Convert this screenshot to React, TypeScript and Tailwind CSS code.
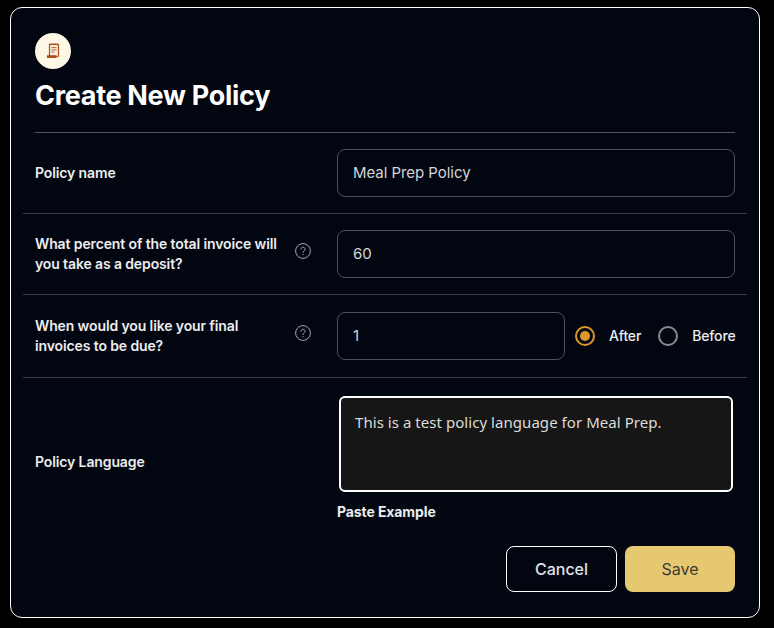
const FONT = { fontFamily: "Inter, 'Liberation Sans', sans-serif" };

function NotepadIcon() {
  return (
    <svg width="14" height="16" viewBox="0 0 14 16" fill="none">
      <path d="M3.5 1.5h9v12h-9z" fill="#fdeedb" stroke="#a8521f" strokeWidth="1.2" />
      <path d="M3.5 1h9" stroke="#a8521f" strokeWidth="1.6" strokeDasharray="1.2 0.6" />
      <path d="M5.4 4.6h5.2M5.4 6.8h5.2M5.4 9h3" stroke="#b9703f" strokeWidth="1" />
      <path d="M1 12.2h9.6v2.8H1z" fill="#a8521f" />
      <path d="M10.6 13.2h2v1h-2z" fill="#c98a5e" />
    </svg>
  );
}

function HelpIcon() {
  return (
    <svg width="16" height="16" viewBox="0 0 16 16" fill="none" className="shrink-0 text-[#a3a5aa]">
      <circle cx="8" cy="8" r="7.4" stroke="currentColor" strokeWidth="1" />
      <path
        d="M5.9 6.2C6 5 6.9 4.3 8 4.3c1.2 0 2.1.8 2.1 1.9 0 1.7-2.1 1.7-2.1 3.3"
        stroke="currentColor"
        strokeWidth="1"
        strokeLinecap="round"
      />
      <circle cx="8" cy="11.6" r="0.7" fill="currentColor" />
    </svg>
  );
}

function Label({ children, help }: { children: React.ReactNode; help?: boolean }) {
  return (
    <div className="w-[302px] shrink-0 flex items-center">
      <p className="w-[252px] text-sm leading-5 font-semibold tracking-[-0.12px] text-[#eceded]">{children}</p>
      {help && <div className="ml-[8px] -mt-[7px]"><HelpIcon /></div>}
    </div>
  );
}

function Field({ value, className }: { value: string; className: string }) {
  return (
    <div className={`h-12 rounded-lg border border-[#4c4f58] px-[15px] flex items-center text-[15px] tracking-[-0.05px] text-[#d4d5d7] shrink-0 ${className}`}>
      {value}
    </div>
  );
}

export default function App() {
  return (
    <div className="w-[774px] h-[628px] bg-black pt-[7px] pl-[10px]" style={FONT}>
      <div className="w-[750px] h-[611px] bg-[#020611] border border-white rounded-xl px-3">
        <div className="px-3 pt-[25px]">
          <div className="w-9 h-9 rounded-full bg-[#fff7e6] flex items-center justify-center">
            <NotepadIcon />
          </div>
          <h1 className="mt-[10px] text-[27px] leading-[34px] font-bold tracking-[-0.3px] text-white">Create New Policy</h1>
          <div className="mt-[19px] border-b border-[#55575e]" />
        </div>

        <div className="px-3 py-4 flex items-center border-b border-[#3b3e47]">
          <Label>Policy name</Label>
          <Field value="Meal Prep Policy" className="w-[398px]" />
        </div>

        <div className="px-3 py-4 flex items-center border-b border-[#3b3e47]">
          <Label help>
            What percent of the total invoice will<br />you take as a deposit?
          </Label>
          <Field value="60" className="w-[398px]" />
        </div>

        <div className="px-3 py-[17px] flex items-center border-b border-[#3b3e47]">
          <Label help>
            When would you like your final<br />invoices to be due?
          </Label>
          <Field value="1" className="w-[228px]" />
          <div className="ml-[10px] flex items-center text-sm font-medium tracking-[-0.15px] text-[#eceded]">
            <span className="w-5 h-5 rounded-full border-2 border-[#dc962a] flex items-center justify-center">
              <span className="w-2.5 h-2.5 rounded-full bg-[#dc962a]" />
            </span>
            <span className="ml-[14px]">After</span>
            <span className="ml-[17px] w-5 h-5 rounded-full border-2 border-[#8a8b90]" />
            <span className="ml-[14px]">Before</span>
          </div>
        </div>

        <div className="px-3 pt-[18px] flex">
          <div className="flex items-center h-[131px]">
            <Label>Policy Language</Label>
          </div>
          <div className="w-[398px]">
            <div
              className="mx-[2px] h-[96px] rounded-md bg-[#161616] border-2 border-white px-[14px] py-[14px] text-[15px] leading-5 tracking-[0.05px] text-[#dcdcdc]"
              style={{ fontFamily: "'Noto Sans', sans-serif" }}
            >
              This is a test policy language for Meal Prep.
            </div>
            <p className="mt-[10px] text-sm leading-5 font-bold tracking-[-0.1px] text-[#eceded]">Paste Example</p>
          </div>
        </div>

        <div className="px-3 mt-[19px] flex justify-end gap-2">
          <button className="w-[111px] h-[46px] rounded-lg border border-white text-base font-medium text-[#e0e1e3]">Cancel</button>
          <button className="w-[110px] h-[46px] rounded-lg bg-[#e6c870] text-base font-normal text-[#3a3a36]">Save</button>
        </div>
      </div>
    </div>
  );
}
